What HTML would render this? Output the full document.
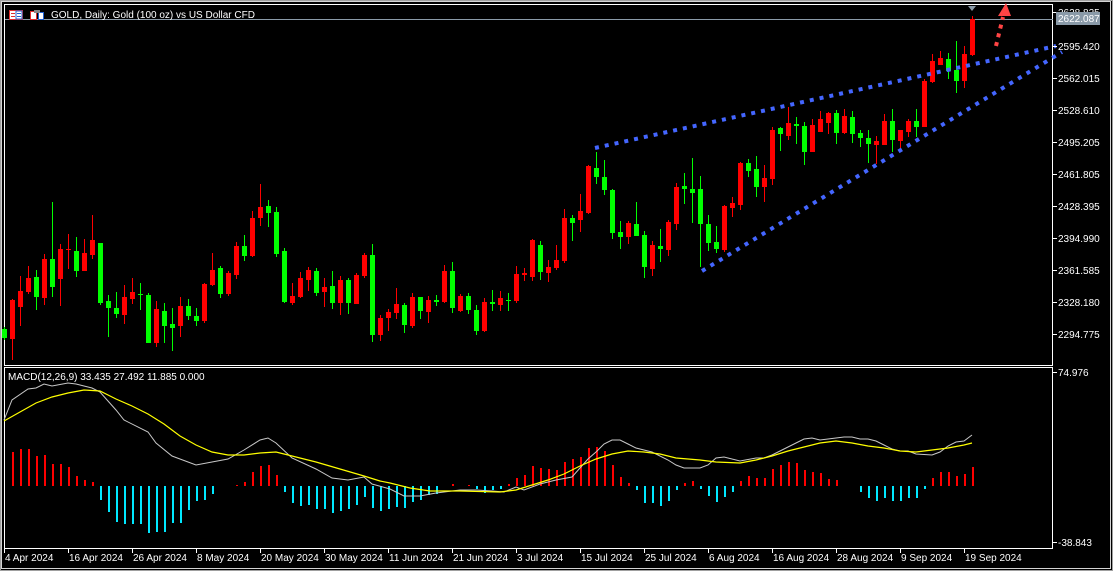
<!DOCTYPE html>
<html><head><meta charset="utf-8"><style>
html,body{margin:0;padding:0;background:#000;width:1113px;height:571px;overflow:hidden}
svg{display:block}
text{font-family:"Liberation Sans",sans-serif;font-size:10px;fill:#fff}
</style></head><body>
<svg id="s" width="1113" height="571" xmlns="http://www.w3.org/2000/svg">
<rect x="0" y="0" width="1113" height="571" fill="#000"/>
<rect x="0.5" y="0.5" width="1112" height="570" fill="none" stroke="#a0a0a0"/>
<rect x="1.5" y="1.5" width="1109" height="567" fill="none" stroke="#d4d4d4"/>
<rect x="4.5" y="4.5" width="1048" height="361" fill="none" stroke="#fff"/>
<rect x="4.5" y="367.5" width="1048" height="181" fill="none" stroke="#fff"/>
<line x1="5" y1="19.5" x2="1053" y2="19.5" stroke="#8a9aa8"/>
<g id="c"></g>
<g fill="none" stroke="#4466ff" stroke-width="4" stroke-dasharray="4 6">
<line x1="595" y1="148" x2="1056" y2="46"/>
<line x1="702" y1="271" x2="1062" y2="52"/>
</g>
<g fill="none" stroke="#ff4444" stroke-width="4" stroke-dasharray="4 5">
<line x1="996" y1="46" x2="1003" y2="17"/>
</g>
<polygon points="1006,3 998,16 1011,16" fill="#ff4444"/>
<polygon points="968,6 976,6 972,11" fill="#8a9aa8"/>
<g id="h"></g>
<rect x="9.5" y="10.5" width="13" height="9" fill="#fff" stroke="#e03030"/>
<rect x="16" y="11" width="6" height="8" fill="#fff" stroke="#2060d0" stroke-width="1"/>
<line x1="11" y1="13.5" x2="15" y2="13.5" stroke="#e03030"/><line x1="11" y1="16.5" x2="15" y2="16.5" stroke="#e03030"/>
<line x1="17" y1="13.5" x2="21" y2="13.5" stroke="#2060d0"/><line x1="17" y1="16.5" x2="21" y2="16.5" stroke="#2060d0"/>
<rect x="30.5" y="11.5" width="6" height="8" fill="#fff" stroke="#e03030"/>
<rect x="38.5" y="12.5" width="5" height="7" fill="#fff" stroke="#2060d0"/>
<rect x="34" y="10" width="6" height="3" fill="#888"/>
<text x="51" y="18">GOLD, Daily:  Gold (100 oz) vs US Dollar CFD</text>
<text x="8" y="380">MACD(12,26,9) 33.435 27.492 11.885 0.000</text>
<rect x="1056" y="12" width="44" height="13" fill="#8a9aa8"/>
<g id="ax"></g>
</svg>
<script>
var NS="http://www.w3.org/2000/svg";
function el(p,t,a,txt){var e=document.createElementNS(NS,t);for(var k in a)e.setAttribute(k,a[k]);if(txt)e.textContent=txt;p.appendChild(e);return e;}
var C=`4 g 329 338 327 340
12 r 300 339 299 360
20 r 291 307 276 326
28 r 278 292 266 294
36 g 277 297 270 310
44 r 259 298 254 305
52 g 259 287 202 297
60 r 249 279 244 306
68 r 249 250 234 269
76 g 251 271 237 277
84 r 253 271 239 271
92 r 240 255 215 259
100 g 243 303 243 305
108 g 301 308 295 337
116 g 308 314 292 318
124 r 297 315 285 324
132 r 292 299 278 304
140 g 294 295 283 310
148 g 295 343 293 343
156 r 309 343 301 347
164 g 311 326 303 343
172 g 324 328 308 351
180 r 306 326 297 337
188 g 306 316 299 320
196 g 316 321 308 326
204 r 284 321 283 323
212 r 270 285 253 286
220 g 268 294 266 298
228 r 273 294 271 296
236 r 246 275 242 279
244 g 246 256 235 261
252 r 218 256 211 257
260 r 207 218 184 226
268 g 206 213 200 227
276 g 212 254 207 257
284 g 251 302 248 303
292 r 296 303 283 305
300 r 278 297 272 298
308 r 270 280 267 291
316 g 271 293 268 296
324 r 287 292 278 307
332 g 286 303 271 309
340 r 280 303 276 315
348 g 280 303 278 314
356 r 275 304 273 304
364 r 255 276 253 278
372 g 255 335 244 342
380 r 318 335 315 341
388 r 312 318 309 331
396 r 304 313 288 319
404 g 305 325 303 333
412 r 297 326 293 328
420 g 297 311 297 319
428 r 300 312 296 323
436 g 300 302 295 306
444 r 271 302 265 303
452 g 271 308 262 313
460 r 296 311 294 312
468 g 296 310 293 314
476 g 310 331 305 335
484 r 302 331 298 332
492 g 302 304 290 311
500 r 298 305 291 311
508 g 300 301 293 311
516 r 274 301 266 303
524 r 273 275 268 281
532 r 240 277 239 281
540 g 245 272 241 280
548 r 267 273 260 282
556 r 260 268 245 270
564 r 218 261 209 263
572 g 218 223 215 241
580 r 211 220 194 232
588 r 166 213 165 214
596 g 168 177 152 184
604 g 177 190 160 195
612 g 190 233 189 239
620 g 232 237 221 249
628 r 223 237 221 244
636 g 224 236 202 236
644 g 235 267 231 278
652 r 245 269 241 276
660 g 246 249 229 262
668 r 222 250 220 256
676 r 187 224 183 230
684 g 186 189 173 204
692 g 189 193 158 223
700 g 189 224 176 267
708 g 224 243 215 251
716 g 242 249 226 253
724 r 206 250 205 252
732 r 203 208 197 217
740 r 163 205 162 210
748 g 163 171 159 177
756 g 169 187 156 197
764 r 178 187 165 202
772 r 130 179 127 185
780 g 128 134 127 151
788 r 123 136 107 140
796 g 124 126 117 144
804 g 126 152 122 165
812 r 125 152 119 152
820 r 119 132 111 132
828 r 113 123 112 134
836 g 113 133 110 144
844 r 116 133 109 134
852 g 117 134 111 143
860 g 133 138 130 147
868 g 138 144 130 163
876 r 141 145 136 164
884 r 121 145 114 145
892 g 121 140 109 152
900 r 130 141 130 151
908 r 121 132 119 137
916 g 121 127 109 137
924 r 81 127 79 127
932 r 61 82 54 83
940 r 58 65 51 65
948 g 59 71 53 79
956 g 70 81 41 93
964 r 54 81 46 88
972 r 19 55 16 56`;
var g=document.getElementById("c");
C.split("\n").forEach(function(l){var a=l.trim().split(/\s+/);var x=+a[0],col=a[1]=="r"?"#ff0000":"#00ff00",t=+a[2],b=+a[3],wt=+a[4],wb=+a[5];
el(g,"rect",{x:x,y:wt,width:1,height:Math.max(1,wb-wt),fill:col});
el(g,"rect",{x:x-2,y:t,width:5,height:Math.max(1,b-t),fill:col});});
var H="12 452,20 449,28 449,36 456,44 455,52 464,60 464,68 467,76 476,84 480,92 482,100 500,108 512,116 522,124 524,132 524,140 524,148 533,156 532,164 532,172 523,180 523,188 510,196 501,204 500,212 494,236 485,244 482,252 472,260 466,268 465,276 475,284 492,292 503,300 506,308 505,316 509,324 509,332 513,340 511,348 509,356 505,364 497,372 508,380 511,388 509,396 507,404 508,412 502,420 500,428 495,436 494,452 484,468 485,476 489,484 493,492 490,500 489,508 484,516 478,524 475,532 466,540 468,548 469,556 470,564 462,572 459,580 457,588 448,596 447,604 451,612 465,620 477,628 483,636 490,644 503,652 503,660 506,668 501,676 490,684 483,692 481,700 489,708 496,716 502,724 497,732 492,740 481,748 476,756 478,764 478,772 469,780 465,788 462,796 463,804 470,812 472,820 473,828 479,836 480,860 492,868 498,876 501,884 498,892 501,900 501,908 498,916 498,924 489,932 478,940 472,948 472,956 476,964 474,972 467";
var h=document.getElementById("h");
H.split(",").forEach(function(p){var a=p.split(" "),x=+a[0],y=+a[1];
if(y<486)el(h,"rect",{x:x,y:y,width:2,height:486-y,fill:"#ff0000"});else el(h,"rect",{x:x,y:486,width:2,height:y-486,fill:"#00e8ff"});});
var grey="4,420 12,400 28,389 36,388 44,384 52,386 68,383 76,384 92,388 100,392 116,410 124,420 148,432 156,443 172,456 196,465 212,462 228,459 244,450 260,440 268,438 276,443 292,458 316,469 332,478 348,480 364,477 372,484 390,489 404,496 420,496 436,493 460,490 476,490 492,491 504,492 516,487 524,490 540,484 556,480 572,477 588,459 596,452 604,444 612,440 620,440 628,444 636,448 652,452 668,460 676,465 684,468 700,468 708,465 716,458 724,457 740,461 756,458 764,458 772,455 780,451 788,447 796,443 804,439 812,438 820,440 836,438 844,437 852,437 860,439 868,439 876,441 884,445 892,449 900,451 908,451 916,454 932,455 940,452 948,446 956,442 964,441 972,435";
var yel="4,421 20,412 36,403 52,397 68,393 84,390 100,391 116,399 132,406 148,414 164,424 180,436 196,445 212,452 228,455 244,455 260,453 276,452 292,456 316,462 340,469 364,476 380,481 390,483 410,488 430,491 460,491 500,492 516,490 532,485 548,480 564,474 580,466 596,459 612,454 628,451 644,452 660,454 676,458 700,460 716,462 740,463 756,460 772,456 788,451 804,447 820,443 836,441 852,443 868,446 884,448 900,451 916,452 932,450 948,448 964,445 972,443";
var s=document.getElementById("s");
el(s,"polyline",{points:grey,fill:"none",stroke:"#c8c8c8","stroke-width":1});
el(s,"polyline",{points:yel,fill:"none",stroke:"#ffff00","stroke-width":1.2});
var ax=document.getElementById("ax");
[["2628.825",12],["2595.420",46],["2562.015",78],["2528.610",110],["2495.205",142],["2461.805",174],["2428.395",206],["2394.990",238],["2361.585",270],["2328.180",302],["2294.775",334]].forEach(function(p){
el(ax,"line",{x1:1053,y1:p[1]+.5,x2:1057,y2:p[1]+.5,stroke:"#fff"});el(ax,"text",{x:1058,y:p[1]+4},p[0]);});
[["74.976",372],["-38.843",542]].forEach(function(p){el(ax,"line",{x1:1053,y1:p[1]+.5,x2:1057,y2:p[1]+.5,stroke:"#fff"});el(ax,"text",{x:1058,y:p[1]+4},p[0]);});
el(ax,"rect",{x:1056,y:12,width:44,height:13,fill:"#8a9aa8"});
el(ax,"text",{x:1058,y:22},"2622.087");
var D=["4 Apr 2024","16 Apr 2024","26 Apr 2024","8 May 2024","20 May 2024","30 May 2024","11 Jun 2024","21 Jun 2024","3 Jul 2024","15 Jul 2024","25 Jul 2024","6 Aug 2024","16 Aug 2024","28 Aug 2024","9 Sep 2024","19 Sep 2024"];
D.forEach(function(d,i){var x=4+64*i;el(ax,"line",{x1:x+.5,y1:549,x2:x+.5,y2:553,stroke:"#fff"});el(ax,"text",{x:x+1,y:561},d);});
</script>
</body></html>
